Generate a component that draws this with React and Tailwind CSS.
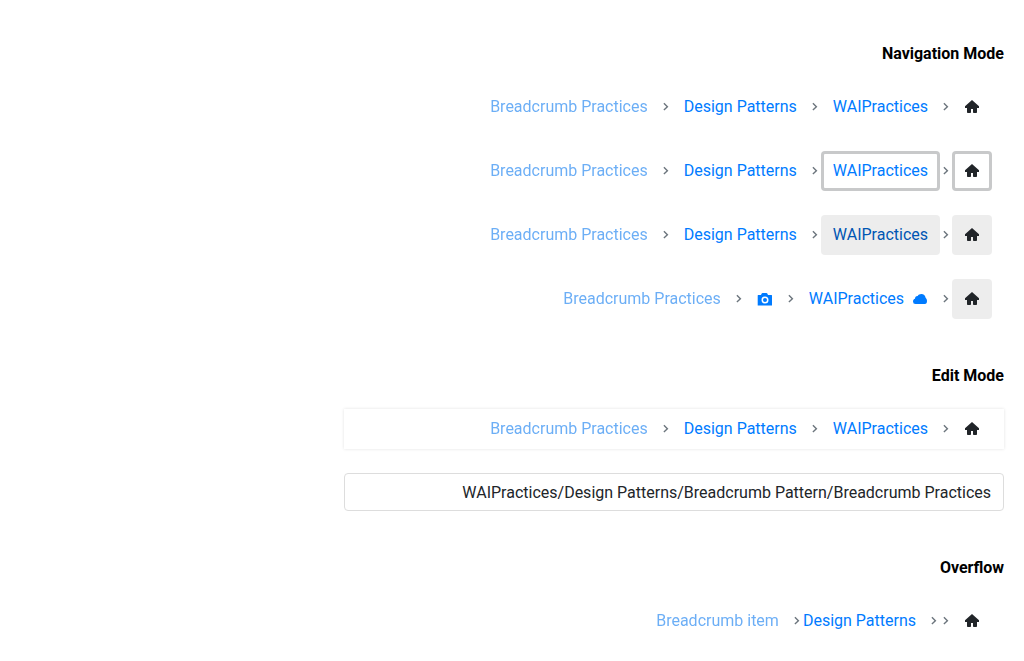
import React from 'react';

function HomeIcon() {
  return (
    <svg className="size-4" viewBox="0 0 16 16" fill="currentColor" aria-hidden="true">
      <path d="M8 .9 1 7.300V9h2v4.200c0 .5.3.8.8.8h2.400c.5 0 .8-.3.8-.8V10h2v3.200c0 .5.3.8.8.8h2.400c.5 0 .8-.3.8-.8V9h2V7.300z" />
    </svg>
  );
}

function CameraIcon() {
  return (
    <svg className="size-4" viewBox="0 0 16 16" fill="currentColor" aria-hidden="true">
      <path
        fillRule="evenodd"
        d="M1.200 4H4l.7-1.500c.2-.3.4-.5.8-.5h4c.4 0 .6.2.8.5L11 4h3.500c.3 0 .5.2.5.5V14.500H.7V4.500c0-.3.2-.5.5-.5zM8 5.500a3.500 3.500 0 1 0 0 7 3.500 3.500 0 0 0 0-7zM8 7a2 2 0 1 1 0 4 2 2 0 0 1 0-4z"
      />
    </svg>
  );
}

function CloudIcon() {
  return (
    <svg className="size-4" viewBox="0 0 16 16" fill="currentColor" aria-hidden="true">
      <path d="M12.800 13H3.500A2.600 2.600 0 0 1 1 10.400C1 9 1.800 8 3 7.700 2.900 6 4 4.800 5.700 4.900 6.400 3.700 7.800 3 9.300 3c2.400 0 4 1.500 4.300 3.700C14.500 7.400 15 8.700 15 10c0 1.700-.7 3-2.200 3z" />
    </svg>
  );
}

function Separator() {
  return (
    <svg
      className="h-3 w-3 shrink-0 text-[#6c757d]"
      viewBox="0 0 12 12"
      fill="none"
      stroke="currentColor"
      strokeWidth="1.4"
      aria-hidden="true"
    >
      <path d="m3.900 2.300 3.500 3.400-3.500 3.400" />
    </svg>
  );
}

const linkStates = {
  normal: 'text-[#007bff]',
  focus: 'text-[#007bff] shadow-[inset_0_0_0_3px_#c8c9ca]',
  hover: 'text-[#0056b3] bg-[#ededed]',
  disabled: 'text-[#007bff] opacity-60 grayscale-[0.1]',
};

const rootStates = {
  normal: '',
  focus: 'shadow-[inset_0_0_0_3px_#c8c9ca]',
  hover: 'bg-[#ededed]',
};

function Root({ state = 'normal' }) {
  return (
    <li className="flex items-center">
      <a
        href="#"
        aria-label="Home"
        className={`flex size-10 items-center justify-center rounded text-[#212529] ${rootStates[state]}`}
      >
        <HomeIcon />
      </a>
    </li>
  );
}

function Item({ children, icon, label, state = 'normal', clipped = false }) {
  return (
    <li className="flex items-center">
      <Separator />
      <a
        href="#"
        aria-label={label}
        aria-disabled={state === 'disabled' ? true : undefined}
        className={`flex h-10 items-center gap-2 rounded whitespace-nowrap ${clipped ? 'ps-3' : 'px-3'} ${linkStates[state]}`}
      >
        {icon}
        {children}
      </a>
    </li>
  );
}

function Breadcrumb({ label, children, boxed = false }) {
  return (
    <nav aria-label={label} className={boxed ? 'px-3 shadow-[0_0_3px_rgba(0,0,0,0.12)]' : 'px-3'}>
      <ol className="flex items-center">{children}</ol>
    </nav>
  );
}

function Section({ title, children }) {
  return (
    <section>
      <h2 className="mb-[21px] font-bold text-black">{title}</h2>
      <div className="flex flex-col gap-6">{children}</div>
    </section>
  );
}

function DefaultTrail({ label, state = 'normal', boxed = false }) {
  return (
    <Breadcrumb label={label} boxed={boxed}>
      <Root state={state} />
      <Item state={state}>WAIPractices</Item>
      <Item>Design Patterns</Item>
      <Item state="disabled">Breadcrumb Practices</Item>
    </Breadcrumb>
  );
}

export default function App() {
  return (
    <main
      dir="rtl"
      className="bg-white px-5 pt-[42px] pb-5 font-['Roboto',sans-serif] text-base leading-6 text-[#212529]"
    >
      <div className="flex w-full max-w-[660px] flex-col gap-[45px]">
        <Section title="Navigation Mode">
          <DefaultTrail label="Default" />
          <DefaultTrail label="Focused" state="focus" />
          <DefaultTrail label="Hovered" state="hover" />
          <Breadcrumb label="With icons">
            <Root state="hover" />
            <Item icon={<CloudIcon />}>WAIPractices</Item>
            <Item icon={<CameraIcon />} label="Design Patterns" />
            <Item state="disabled">Breadcrumb Practices</Item>
          </Breadcrumb>
        </Section>
        <Section title="Edit Mode">
          <DefaultTrail label="Editable" boxed />
          <input
            type="text"
            aria-label="Path"
            defaultValue="WAIPractices/Design Patterns/Breadcrumb Pattern/Breadcrumb Practices"
            className="h-[38px] w-full rounded border border-[#dddddd] bg-white px-3 text-[#212529] outline-none"
          />
        </Section>
        <Section title="Overflow">
          <Breadcrumb label="Overflowing">
            <Root />
            <li className="flex items-center">
              <Separator />
            </li>
            <Item clipped>Design Patterns</Item>
            <Item state="disabled">Breadcrumb item</Item>
          </Breadcrumb>
        </Section>
      </div>
    </main>
  );
}
